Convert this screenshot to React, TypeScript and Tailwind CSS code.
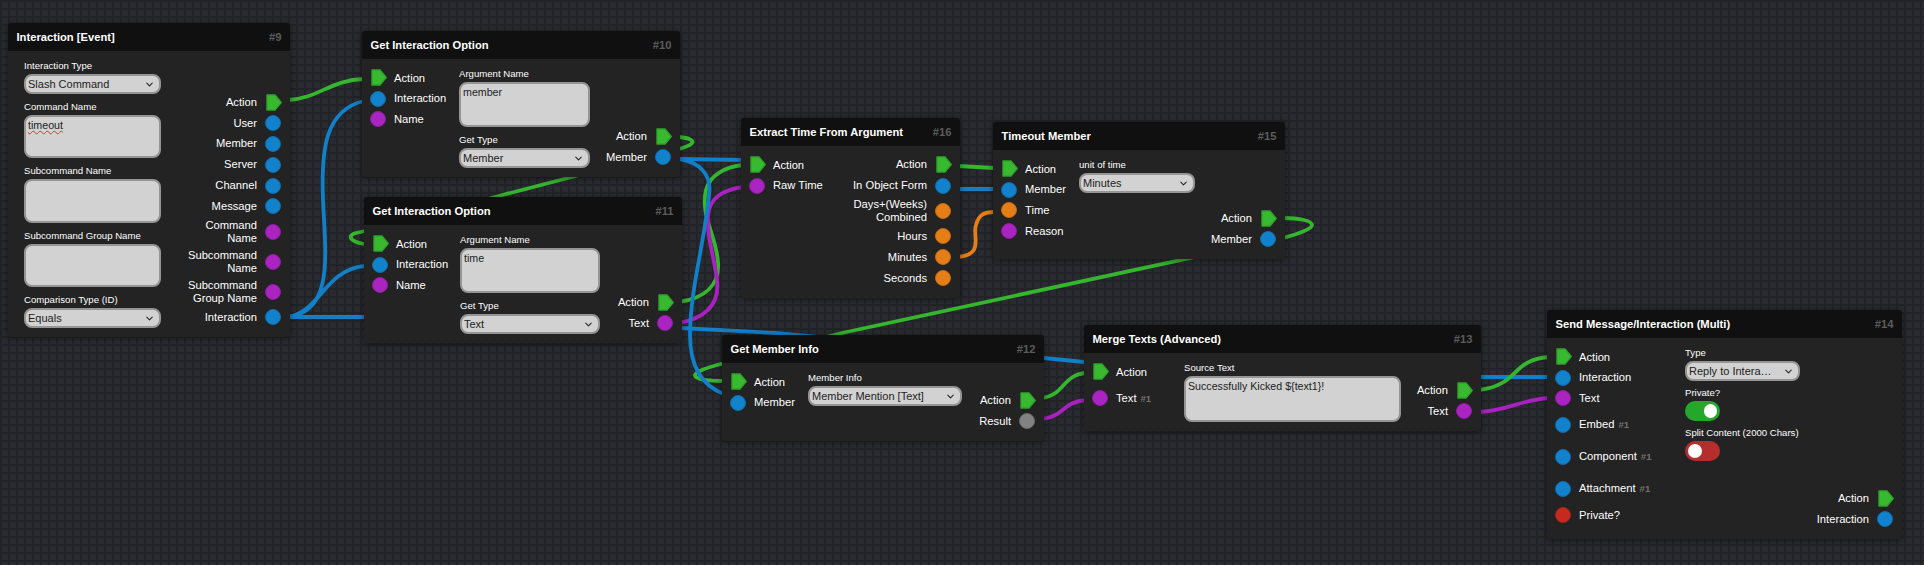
import type { ReactNode } from "react";
import { ChevronDown } from "lucide-react";

type Kind = "action" | "blue" | "purple" | "orange" | "gray" | "red";

const dotColors: Record<Exclude<Kind, "action">, string> = {
  blue: "bg-[#1282cc] border-[#0f6dab]",
  purple: "bg-[#aa24c2] border-[#8c1ea0]",
  orange: "bg-[#e67e17] border-[#bd6b16]",
  gray: "bg-[#828282] border-[#6c6c6c]",
  red: "bg-[#c62a1e] border-[#a3231a]",
};

const wires = [
  { c: "#36b52f", d: "M288 100 C 320 98 330 80 364 79" },
  { c: "#1180c9", d: "M288 317 C 335 312 325 250 323 200 C 321 150 325 110 364 101" },
  { c: "#1180c9", d: "M288 317 C 320 312 325 270 364 266" },
  { c: "#1180c9", d: "M288 317 L 362 317 L 681 328 L 775 333 L 1044 358 L 1084 362 L 1481 377 L 1549 377" },
  { c: "#36b52f", d: "M679 137 C 690 138 694 141 692 143 C 690 146 685 147 679 149 L 495 197 C 430 215 380 228 356 233 C 348 235 348 241 364 244" },
  { c: "#36b52f", d: "M1283 218 C 1300 218 1312 221 1312 225 C 1312 229 1298 234 1283 238 L 842 333 L 725 363 C 700 369 692 374 696 377 C 700 380 712 381 724 381" },
  { c: "#36b52f", d: "M679 302 C 705 298 720 285 718 262 C 716 235 700 215 706 190 C 710 175 725 167 743 165" },
  { c: "#a822c0", d: "M679 323 C 705 318 720 305 717 280 C 714 255 706 235 708 215 C 710 198 722 190 743 187" },
  { c: "#1180c9", d: "M679 159 L 743 160 L 958 189 L 994 189" },
  { c: "#1180c9", d: "M679 159 C 700 162 712 175 709 195 C 705 240 690 290 690 335 C 690 365 700 385 724 394" },
  { c: "#36b52f", d: "M958 166 L 994 168" },
  { c: "#e67e17", d: "M958 257 C 985 255 972 235 976 225 C 979 214 985 212 994 212" },
  { c: "#36b52f", d: "M1042 398 C 1065 395 1062 375 1086 373" },
  { c: "#a822c0", d: "M1042 419 C 1065 416 1062 402 1086 400" },
  { c: "#36b52f", d: "M1479 390 C 1520 385 1510 360 1549 357" },
  { c: "#a822c0", d: "M1479 412 C 1510 410 1520 400 1549 398" },
];

function Socket({ kind }: { kind: Kind }) {
  if (kind === "action") {
    return (
      <svg viewBox="0 0 16 17" className="h-[17px] w-[16px] shrink-0 translate-x-[1px]">
        <path
          d="M1 1 H9 L15.2 8.5 L9 16 H1 Z"
          fill="#38ba30"
          stroke="#2fa52a"
          strokeWidth="1.4"
          strokeLinejoin="round"
        />
      </svg>
    );
  }
  return <span className={`h-[16px] w-[16px] shrink-0 rounded-full border-[1.5px] ${dotColors[kind]}`} />;
}

function Port({
  label,
  kind,
  out,
  count,
  tall,
}: {
  label: string;
  kind: Kind;
  out?: boolean;
  count?: boolean;
  tall?: boolean;
}) {
  const height = count ? "h-[32px]" : tall ? "h-[30px]" : "h-[20.8px]";
  if (out) {
    return (
      <div className={`flex items-center justify-end gap-2 ${height}`}>
        <span className="whitespace-pre-line text-right leading-[13px]">{label}</span>
        <Socket kind={kind} />
      </div>
    );
  }
  return (
    <div className={`flex items-center gap-2 ${height}`}>
      <Socket kind={kind} />
      <span className="whitespace-nowrap">
        {label}
        {count && <span className="ml-[4px] text-[9.6px] font-bold text-[#707070]">#1</span>}
      </span>
    </div>
  );
}

function Field({ label, children }: { label: string; children: ReactNode }) {
  return (
    <div className="flex flex-col">
      <div className="h-[14px] whitespace-nowrap text-[9.6px] leading-[12px]">{label}</div>
      {children}
    </div>
  );
}

function Select({ value }: { value: string }) {
  return (
    <div className="relative w-full">
      <select
        defaultValue={value}
        className="block h-[20.4px] w-full appearance-none truncate rounded-[8px] border-2 border-[#959595] bg-[#d2d2d2] pl-[2px] pr-[21px] text-[11px] text-[#222222]"
      >
        <option>{value}</option>
      </select>
      <ChevronDown
        size={11}
        strokeWidth={2.2}
        className="pointer-events-none absolute right-[6px] top-[5px] text-[#222222]"
      />
    </div>
  );
}

function TextBox({ className, children }: { className: string; children?: ReactNode }) {
  return (
    <div
      className={`w-full rounded-[8px] border-2 border-[#959595] bg-[#d2d2d2] p-[2px] text-[10.67px] leading-[12px] text-[#222222] ${className}`}
    >
      {children}
    </div>
  );
}

function Toggle({ on }: { on?: boolean }) {
  return (
    <div
      className={`flex h-[20px] w-[35px] items-center rounded-full px-[3px] ${
        on ? "justify-end bg-[#23a82b]" : "justify-start bg-[#b52d2d]"
      }`}
    >
      <span className="h-[13.5px] w-[13.5px] rounded-full bg-white" />
    </div>
  );
}

function Node({
  id,
  title,
  className,
  children,
}: {
  id: number;
  title: string;
  className: string;
  children: ReactNode;
}) {
  return (
    <div
      className={`absolute flex flex-col rounded-[3px] bg-[#232323] text-[11.2px] text-white shadow-[0_1px_6px_rgba(0,0,0,0.5)] ${className}`}
    >
      <div className="flex h-[28px] shrink-0 items-center justify-between rounded-t-[3px] bg-[#101010] px-[8.5px] font-bold">
        <span>{title}</span>
        <span className="text-[#5c5c5c]">#{id}</span>
      </div>
      <div className="flex min-h-0 flex-1 pb-[9.5px] pl-[8px] pr-[9px] pt-[8.5px]">{children}</div>
    </div>
  );
}

export default function App() {
  return (
    <div className="relative h-[565px] w-full overflow-hidden bg-[#2a2b30] bg-[linear-gradient(#222327_2px,transparent_2px),linear-gradient(90deg,#222327_2px,transparent_2px)] bg-[size:8px_8px] font-['Liberation_Sans',Arial,sans-serif]">
      <svg className="absolute inset-0 h-full w-full" viewBox="0 0 1924 565" fill="none">
        {wires.map((w, i) => (
          <path key={i} d={w.d} stroke={w.c} strokeWidth="3.8" />
        ))}
      </svg>

      <Node id={9} title="Interaction [Event]" className="left-[8px] top-[23px] h-[314px] w-[282px]">
        <div className="ml-[8px] flex w-[137px] flex-col gap-[7px]">
          <Field label="Interaction Type">
            <Select value="Slash Command" />
          </Field>
          <Field label="Command Name">
            <TextBox className="h-[43.4px]">
              <span className="underline decoration-[#e03030] decoration-wavy decoration-1">timeout</span>
            </TextBox>
          </Field>
          <Field label="Subcommand Name">
            <TextBox className="h-[43.4px]" />
          </Field>
          <Field label="Subcommand Group Name">
            <TextBox className="h-[43.4px]" />
          </Field>
          <Field label="Comparison Type (ID)">
            <Select value="Equals" />
          </Field>
        </div>
        <div className="ml-auto flex flex-col justify-end">
          <Port out label="Action" kind="action" />
          <Port out label="User" kind="blue" />
          <Port out label="Member" kind="blue" />
          <Port out label="Server" kind="blue" />
          <Port out label="Channel" kind="blue" />
          <Port out label="Message" kind="blue" />
          <Port out tall label={"Command\nName"} kind="purple" />
          <Port out tall label={"Subcommand\nName"} kind="purple" />
          <Port out tall label={"Subcommand\nGroup Name"} kind="purple" />
          <Port out label="Interaction" kind="blue" />
        </div>
      </Node>

      <Node id={10} title="Get Interaction Option" className="left-[362px] top-[31px] h-[146px] w-[318px]">
        <div className="w-[89px] shrink-0">
          <Port label="Action" kind="action" />
          <Port label="Interaction" kind="blue" />
          <Port label="Name" kind="purple" />
        </div>
        <div className="flex w-[131px] flex-col gap-[7px]">
          <Field label="Argument Name">
            <TextBox className="h-[45px]">member</TextBox>
          </Field>
          <Field label="Get Type">
            <Select value="Member" />
          </Field>
        </div>
        <div className="ml-auto flex flex-col justify-end">
          <Port out label="Action" kind="action" />
          <Port out label="Member" kind="blue" />
        </div>
      </Node>

      <Node id={11} title="Get Interaction Option" className="left-[364px] top-[197px] h-[146px] w-[318px]">
        <div className="w-[88px] shrink-0">
          <Port label="Action" kind="action" />
          <Port label="Interaction" kind="blue" />
          <Port label="Name" kind="purple" />
        </div>
        <div className="flex w-[140px] flex-col gap-[7px]">
          <Field label="Argument Name">
            <TextBox className="h-[45px]">time</TextBox>
          </Field>
          <Field label="Get Type">
            <Select value="Text" />
          </Field>
        </div>
        <div className="ml-auto flex flex-col justify-end">
          <Port out label="Action" kind="action" />
          <Port out label="Text" kind="purple" />
        </div>
      </Node>

      <Node id={16} title="Extract Time From Argument" className="left-[741px] top-[118px] h-[180px] w-[219px]">
        <div>
          <Port label="Action" kind="action" />
          <Port label="Raw Time" kind="purple" />
        </div>
        <div className="ml-auto flex flex-col">
          <Port out label="Action" kind="action" />
          <Port out label="In Object Form" kind="blue" />
          <Port out tall label={"Days+(Weeks)\nCombined"} kind="orange" />
          <Port out label="Hours" kind="orange" />
          <Port out label="Minutes" kind="orange" />
          <Port out label="Seconds" kind="orange" />
        </div>
      </Node>

      <Node id={15} title="Timeout Member" className="left-[993px] top-[122px] h-[137px] w-[292px]">
        <div className="w-[78px] shrink-0">
          <Port label="Action" kind="action" />
          <Port label="Member" kind="blue" />
          <Port label="Time" kind="orange" />
          <Port label="Reason" kind="purple" />
        </div>
        <div className="w-[116px]">
          <Field label="unit of time">
            <Select value="Minutes" />
          </Field>
        </div>
        <div className="ml-auto flex flex-col justify-end">
          <Port out label="Action" kind="action" />
          <Port out label="Member" kind="blue" />
        </div>
      </Node>

      <Node id={12} title="Get Member Info" className="left-[722px] top-[335px] h-[106px] w-[322px]">
        <div className="w-[78px] shrink-0">
          <Port label="Action" kind="action" />
          <Port label="Member" kind="blue" />
        </div>
        <div className="w-[154px]">
          <Field label="Member Info">
            <Select value="Member Mention [Text]" />
          </Field>
        </div>
        <div className="ml-auto flex flex-col justify-end">
          <Port out label="Action" kind="action" />
          <Port out label="Result" kind="gray" />
        </div>
      </Node>

      <Node id={13} title="Merge Texts (Advanced)" className="left-[1084px] top-[325px] h-[106px] w-[397px]">
        <div className="w-[92px] shrink-0">
          <Port label="Action" kind="action" />
          <Port count label="Text" kind="purple" />
        </div>
        <div className="w-[217px]">
          <Field label="Source Text">
            <TextBox className="h-[46px]">Successfully Kicked {"${text1}"}!</TextBox>
          </Field>
        </div>
        <div className="ml-auto flex flex-col justify-end">
          <Port out label="Action" kind="action" />
          <Port out label="Text" kind="purple" />
        </div>
      </Node>

      <Node id={14} title="Send Message/Interaction (Multi)" className="left-[1547px] top-[310px] h-[229px] w-[355px]">
        <div className="w-[130px] shrink-0">
          <Port label="Action" kind="action" />
          <Port label="Interaction" kind="blue" />
          <Port label="Text" kind="purple" />
          <Port count label="Embed" kind="blue" />
          <Port count label="Component" kind="blue" />
          <Port count label="Attachment" kind="blue" />
          <Port label="Private?" kind="red" />
        </div>
        <div className="flex w-[115px] flex-col gap-[6px]">
          <Field label="Type">
            <Select value="Reply to Interaction" />
          </Field>
          <Field label="Private?">
            <Toggle on />
          </Field>
          <Field label="Split Content (2000 Chars)">
            <Toggle />
          </Field>
        </div>
        <div className="ml-auto flex flex-col justify-end">
          <Port out label="Action" kind="action" />
          <Port out label="Interaction" kind="blue" />
        </div>
      </Node>
    </div>
  );
}
